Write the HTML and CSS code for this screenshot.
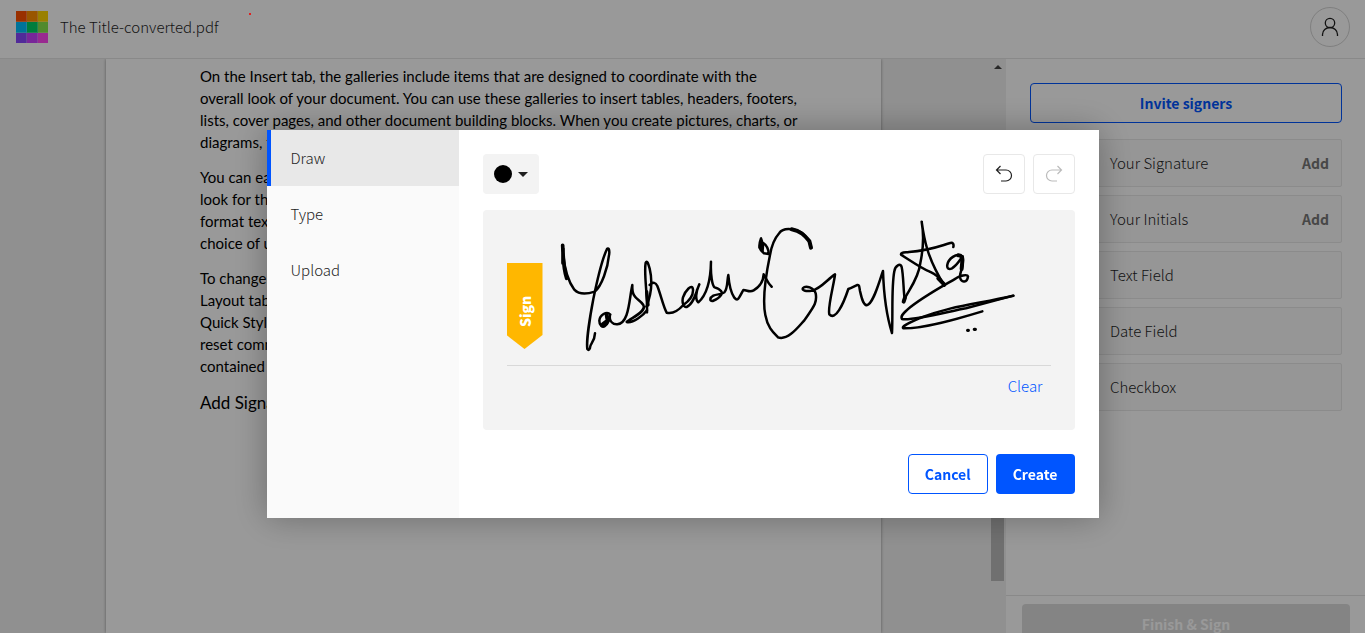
FILE: index.html
```html
<!DOCTYPE html>
<html lang="en">
<head>
<meta charset="utf-8">
<title>The Title-converted.pdf</title>
<link rel="stylesheet" href="styles.css">
</head>
<body>
<div class="app">
  <header class="topbar">
    <svg class="logo" viewBox="0 0 32 32" aria-hidden="true">
      <g opacity=".75"><path fill="#ff5100" d="M0 0h11v11H0z"/><path fill="#ff8f00" d="M11 0h11v11H11z"/><path fill="#ffd500" d="M22 0h10v11H22z"/>
      <path fill="#00c0ff" d="M0 11h11v11H0z"/><path fill="#00d066" d="M11 11h11v11H11z"/><path fill="#85e64d" d="M22 11h10v11H22z"/>
      <path fill="#8847ff" d="M0 22h11v10H0z"/><path fill="#c840ff" d="M11 22h11v10H11z"/><path fill="#ff47f0" d="M22 22h10v10H22z"/></g>
      <path fill="#ff5100" d="M0 0h10v10H0z"/><path fill="#ff8f00" d="M11 0h10v10H11z"/><path fill="#ffd500" d="M22 0h10v10H22z"/>
      <path fill="#00c0ff" d="M0 11h10v10H0z"/><path fill="#00d066" d="M11 11h10v10H11z"/><path fill="#85e64d" d="M22 11h10v10H22z"/>
      <path fill="#8847ff" d="M0 22h10v10H0z"/><path fill="#c840ff" d="M11 22h10v10H11z"/><path fill="#ff47f0" d="M22 22h10v10H22z"/>
    </svg>
    <h1 class="filename">The Title-converted.pdf</h1>
    <button class="account" type="button" aria-label="Account">
      <svg viewBox="0 0 18 20" width="18" height="20"><circle cx="9" cy="6" r="4.7"/><path d="M1.500 19v-1.500a7.500 7 0 0 1 15 0V19"/></svg>
    </button>
  </header>
  <div class="workspace">
    <main class="viewer">
      <article class="page">
        <p>On the Insert tab, the galleries include items that are designed to coordinate with the<br>overall look of your document. You can use these galleries to insert tables, headers, footers,<br>lists, cover pages, and other document building blocks. When you create pictures, charts, or<br>diagrams, they also coordinate with your current document look.</p>
        <p>You can easily change the formatting of selected text in the document by choosing a<br>look for the selected text from the Quick Styles gallery on the Home tab. You can also<br>format text directly by using the other controls on the Home tab. Most controls offer a<br>choice of using the look from the current theme or using a format that you specify.</p>
        <p>To change the overall look of your document, choose new Theme elements on the Page<br>Layout tab. To change the looks available in the Quick Style gallery, use the Change<br>Quick Style Set command. Both the Themes gallery and the Quick Styles gallery provide<br>reset commands so that you can always restore the look of your document to the original<br>contained in your current template.</p>
        <p class="page-large">Add Signature</p>
      </article>
    </main>
    <div class="scrollbar" aria-hidden="true">
      <span class="scroll-up"></span>
      <span class="scroll-thumb"></span>
    </div>
    <aside class="sidebar">
      <div class="tools">
        <button class="btn btn-outline invite" type="button">Invite signers</button>
        <ul class="fields">
          <li><button class="field" type="button"><span>Your Signature</span><strong>Add</strong></button></li>
          <li><button class="field" type="button"><span>Your Initials</span><strong>Add</strong></button></li>
          <li><button class="field" type="button"><span>Text Field</span></button></li>
          <li><button class="field" type="button"><span>Date Field</span></button></li>
          <li><button class="field" type="button"><span>Checkbox</span></button></li>
        </ul>
      </div>
      <div class="finish-bar"><button class="btn finish" type="button" disabled>Finish &amp; Sign</button></div>
    </aside>
  </div>
</div>
<div class="overlay">
  <span class="pointer-dot"></span>
  <section class="dialog" role="dialog" aria-modal="true" aria-label="Create signature">
    <nav class="tabs">
      <button class="tab tab-active" type="button">Draw</button>
      <button class="tab" type="button">Type</button>
      <button class="tab" type="button">Upload</button>
    </nav>
    <div class="panel">
      <div class="toolbar">
        <button class="color" type="button" aria-label="Pen color"><span class="swatch"></span><span class="caret"></span></button>
        <div class="history">
          <button class="icon-btn" type="button" aria-label="Undo"><svg viewBox="0 0 18 18" width="18" height="18"><path d="M5.500 1 1.500 5l4 4M1.500 5H11a5.500 5.500 0 0 1 0 11H6"/></svg></button>
          <button class="icon-btn" type="button" aria-label="Redo" disabled><svg viewBox="0 0 18 18" width="18" height="18"><path d="M12.500 1l4 4-4 4M16.500 5H7a5.500 5.500 0 0 0 0 11h5"/></svg></button>
        </div>
      </div>
      <div class="pad">
        <div class="sign-tag"><span>Sign</span></div>
        <svg class="ink" viewBox="483 210 592 220" aria-label="Signature">
          <g transform="translate(550 215) scale(.33333)">
            <path d="M38 91C40 145 49 192 73 224C86 238 110 238 134 230C154 214 174 162 178 112C178 101 175 98 171 102C154 137 139 208 130 252C119 309 109 382 112 402C115 406 118 406 120 399C119 386 134 381 135 355"/>
            <path d="M38 91C40 125 39 158 50 190M39 100V145" stroke-width="11"/>
            <path d="M181 299C170 286 149 301 148 317C148 331 157 339 165 333C176 326 179 307 180 299C176 320 190 329 202 328C238 324 237 253 247 210C245 254 267 249 280 270C291 290 243 309 230 321C249 326 281 300 291 286"/>
            <path d="M170 300 173 317 158 328" stroke-width="12"/>
            <path d="M291 292C293 241 281 174 287 143C291 134 295 146 299 161C311 211 301 246 289 275M299 210C310 200 317 202 322 213C332 238 340 275 350 293C367 297 384 288 400 270C421 255 430 240 429 224C427 202 405 229 399 247C395 263 401 278 410 276C432 267 440 226 448 208C434 234 438 258 445 262C473 237 482 192 483 140C481 180 487 213 494 217C535 230 507 250 488 258C478 259 479 248 490 242C500 237 515 239 523 232C534 221 531 193 535 180C537 205 543 234 553 248C563 260 565 253 580 225C593 226 599 233 611 226C630 215 640 196 641 178C650 192 653 205 665 215"/>
            <path d="M290 230 294 270" stroke-width="10"/>
            <path d="M633 70C622 100 632 105 642 115L656 117C656 99 646 88 637 82Z"/>
            <path fill="currentColor" stroke="none" d="M632 72 625 99 641 114 643 89Z"/>
            <path d="M783 99C784 83 763 56 749 50C730 40 699 37 688 54C672 72 664 96 660 120C647 183 636 251 646 300C653 338 669 352 684 367C714 378 748 332 763 316C788 279 803 265 797 235C792 218 767 210 759 219C754 228 771 229 785 227C812 222 833 192 855 178C853 203 832 277 838 298C856 318 879 270 895 222C905 219 914 213 922 210C928 208 928 216 930 228C935 250 940 270 950 271C970 266 985 207 999 168C1001 229 1011 307 1026 354C1029 293 1024 215 1033 169C1035 151 1052 143 1055 156C1061 184 1060 230 1064 250"/>
            <path d="M725 43C752 47 766 64 778 78L783 98" stroke-width="12"/>
            <g transform="translate(-10)">
              <path d="M1070 260C1079 233 1115 197 1121 144C1129 106 1133 65 1125 20C1132 71 1141 128 1193 211"/>
              <path d="M1071 260 1075 248M1175 190 1193 209" stroke-width="12"/>
              <path d="M1220 96C1222 88 1219 82 1211 84C1177 94 1148 107 1087 111C1072 113 1062 112 1063 119C1092 137 1118 156 1149 170C1163 177 1179 184 1193 211"/>
              <path d="M1243 124C1230 112 1205 132 1202 149C1200 160 1206 165 1216 160C1231 151 1238 137 1248 124C1254 151 1239 168 1240 187C1244 205 1262 203 1264 184C1262 176 1237 184 1228 190C1180 218 1124 248 1083 283C1073 293 1060 302 1066 312C1093 319 1208 289 1258 280L1400 242"/>
              <path d="M1235 121C1252 120 1246 143 1245 162" stroke-width="12"/>
              <path d="M1400 242C1286 268 1215 272 1120 309C1093 321 1062 334 1070 340C1132 341 1225 314 1307 289"/>
              <path d="M1263 346H1265M1283 343H1286" stroke-width="10"/>
            </g>
          </g>
        </svg>
        <div class="baseline"><button class="clear" type="button">Clear</button></div>
      </div>
      <div class="actions">
        <button class="btn btn-outline cancel" type="button">Cancel</button>
        <button class="btn btn-primary" type="button">Create</button>
      </div>
    </div>
  </section>
</div>
</body>
</html>
```
FILE: styles.css
```css
* { box-sizing: border-box; }
body {
  margin: 0;
  color: #1f1f1f;
  font: 300 15px/24px "Noto Sans CJK SC", sans-serif;
}
button { font: inherit; color: inherit; cursor: pointer; }
.app { display: flex; flex-direction: column; height: 100vh; overflow: hidden; background: #fff; }

.topbar {
  display: flex;
  flex: none;
  align-items: center;
  gap: 12px;
  padding: 7px 15px 11px 16px;
  border-bottom: 1px solid #e4e4e4;
}
.logo { width: 32px; height: 32px; }
.filename { margin: 0; font-size: 15px; font-weight: 300; }
.account {
  display: grid;
  place-items: center;
  width: 40px;
  height: 40px;
  margin-left: auto;
  padding: 0;
  border: 1px solid #d4d4d4;
  border-radius: 50%;
  background: none;
}
.account svg { fill: none; stroke: #1f1f1f; stroke-width: 1.3; }

.workspace { display: flex; flex: 1; min-height: 0; }
.viewer {
  display: flex;
  flex: 1;
  justify-content: center;
  min-width: 0;
  padding-right: 3px;
  overflow: hidden;
  background: #f1f1f1;
}
.page {
  flex: 0 1 775px;
  padding: 6px 94px;
  overflow: hidden;
  background: #fff;
  box-shadow: 0 0 3px rgba(0, 0, 0, .4);
  color: #000;
  font: 15px/22px Lato, sans-serif;
  white-space: nowrap;
}
.page p { margin: 0 0 13px; }
.page .page-large { padding-top: 2px; font-size: 17px; }
.scrollbar {
  display: flex;
  flex: none;
  flex-direction: column;
  justify-content: space-between;
  width: 16px;
  padding: 6px 2px 52px 1px;
  background: #f1f1f1;
}
.scroll-up { align-self: center; border: 4px solid transparent; border-top: 0; border-bottom-color: #444; }
.scroll-thumb { height: 420px; background: #bbb; }

.sidebar { display: flex; flex: none; flex-direction: column; width: 359px; }
.tools { flex: 1; padding: 24px 23px 0 24px; }
.btn {
  height: 40px;
  padding: 0 16px;
  border: 1px solid transparent;
  border-radius: 4px;
  font-size: 14px;
  font-weight: 700;
}
.btn-outline { border-color: #0055ff; background: none; color: #0055ff; }
.btn-primary { background: #0055ff; color: #fff; }
.invite { width: 100%; }
.fields { display: grid; gap: 8px; margin: 16px 0 0; padding: 0; list-style: none; }
.field {
  display: flex;
  align-items: center;
  justify-content: space-between;
  width: 100%;
  height: 48px;
  padding: 0 12px 0 79px;
  border: 1px solid #e8e8e8;
  border-radius: 2px;
  background: #fafafa;
}
.field strong { color: #777; font-size: 14px; font-weight: 700; }
.finish-bar { height: 38px; padding: 8px 15px 0 16px; border-top: 1px solid #e4e4e4; }
.finish { width: 100%; background: #dcdcdc; color: #fff; }

.overlay {
  position: fixed;
  inset: 0;
  display: grid;
  place-items: center;
  padding-top: 15px;
  background: rgba(0, 0, 0, .4);
}
.pointer-dot { position: absolute; top: 13px; left: 249px; width: 2px; height: 2px; background: #e02020; }
.dialog {
  display: flex;
  width: 832px;
  max-width: 96vw;
  background: #fff;
  box-shadow: 0 0 32px rgba(0, 0, 0, .3);
}
.tabs { flex: none; width: 192px; background: #fafafa; }
.tab {
  display: block;
  width: 100%;
  height: 56px;
  padding: 0 20px;
  border: 0;
  border-left: 4px solid transparent;
  background: none;
  text-align: left;
}
.tab-active { border-color: #0055ff; background: #e8e8e8; }
.panel { display: flex; flex: 1; flex-direction: column; min-width: 0; padding: 24px; }
.toolbar, .history { display: flex; justify-content: space-between; }
.history { gap: 8px; }
.color {
  display: flex;
  align-items: center;
  gap: 6px;
  width: 56px;
  height: 40px;
  padding: 0 11px;
  border: 0;
  border-radius: 4px;
  background: #f3f3f3;
}
.swatch { width: 18px; height: 18px; border-radius: 50%; background: #000; }
.caret { border: 5px solid transparent; border-top-color: #1f1f1f; border-bottom: 0; }
.icon-btn {
  display: grid;
  place-items: center;
  width: 42px;
  height: 40px;
  padding: 0;
  border: 1px solid #e8e8e8;
  border-radius: 4px;
  background: none;
}
.icon-btn svg { fill: none; stroke: #1f1f1f; stroke-width: 1.2; }
.icon-btn:disabled svg { stroke: #bbb; }
.pad {
  position: relative;
  height: 220px;
  margin-top: 16px;
  padding: 53px 24px 0;
  border-radius: 4px;
  background: #f3f3f3;
}
.sign-tag {
  display: flex;
  justify-content: center;
  width: 36px;
  height: 86px;
  padding: 32px 0 22px;
  background: #ffb700;
  clip-path: polygon(0 0, 100% 0, 100% 72px, 50% 100%, 0 72px);
  color: #fff;
  font-size: 14px;
  font-weight: 900;
  line-height: 36px;
}
.sign-tag span { writing-mode: vertical-rl; transform: rotate(180deg); }
.ink {
  position: absolute;
  inset: 0;
  width: 100%;
  height: 100%;
  color: #000;
  fill: none;
  stroke: currentColor;
  stroke-width: 7.5;
  stroke-linecap: round;
  stroke-linejoin: round;
  pointer-events: none;
}
.baseline { display: flex; justify-content: flex-end; margin-top: 16px; padding: 8px 8px 0; border-top: 1px solid #d8d8d8; }
.clear { padding: 0; border: 0; background: none; color: #0055ff; }
.actions { display: flex; justify-content: flex-end; gap: 8px; margin-top: 24px; }
```
